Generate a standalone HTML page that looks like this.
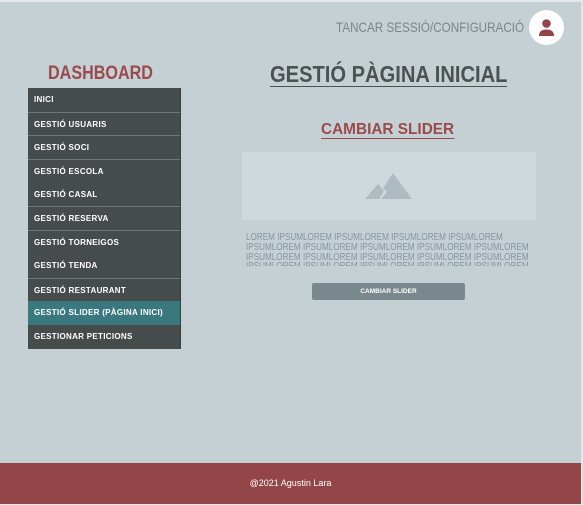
<!DOCTYPE html>
<html><head><meta charset="utf-8"><style>
*{margin:0;padding:0;box-sizing:border-box}
body{width:583px;height:505px;background:#e3e7e9;position:relative;overflow:hidden;font-family:"Liberation Sans",sans-serif}
.page{position:absolute;left:0;top:2px;width:581px;height:461px;background:#c5d0d4}
.foot{position:absolute;left:0;top:463px;width:581px;height:41px;background:#944548;color:#fff;font-size:9px;text-align:center;line-height:41px}
.n{transform-origin:0 0;white-space:nowrap}
.top{position:absolute;left:336px;top:19px;font-size:14px;color:#7d8587;transform:scaleX(0.835)}
.av{position:absolute;left:529px;top:10px;width:35px;height:35px;border-radius:50%;background:#fff}
.dash{position:absolute;left:48px;top:63px;font-size:19px;font-weight:bold;color:#9a4a4d;transform:scaleX(0.85)}
.side{position:absolute;left:28px;top:88px;width:153px;background:#464b4b;border-right:1px solid #3a3f3f}
.side div{height:23.7px;line-height:23.7px;padding-left:6px;font-size:8px;font-weight:bold;color:#fff;letter-spacing:0.3px}
.side .b{border-top:1px solid #6e7676}
.side .act{background:#3a7880}
.h1{position:absolute;left:270px;top:62px;font-size:23px;font-weight:bold;color:#4c524f;border-bottom:1.5px solid #4c524f;line-height:24px;transform:scaleX(0.875)}
.h2{position:absolute;left:321px;top:121px;font-size:16px;font-weight:bold;color:#9a4a4d;border-bottom:1.5px solid #9a4a4d;line-height:17px;transform:scaleX(0.96)}
.img{position:absolute;left:242px;top:152px;width:294px;height:68px;background:#cfd8dc}
.lw{position:absolute;left:246px;top:233px;width:290px;height:33px;overflow:hidden}
.lorem{font-size:10.5px;color:#8595a0;line-height:9.8px;transform:scaleX(0.775)}
.btn{position:absolute;left:312px;top:283px;width:153px;height:17px;background:#78888d;border-radius:2px;color:#fff;font-size:6.5px;font-weight:bold;text-align:center;line-height:17px}
</style></head><body>
<div class="page"></div>
<div class="top n">TANCAR SESSIÓ/CONFIGURACIÓ</div>
<div class="av"><svg width="35" height="35" viewBox="0 0 35 35"><circle cx="17.5" cy="13.5" r="4.3" fill="#944548"/><path d="M10 26 Q10 19.5 17.5 19.5 Q25 19.5 25 26 Z" fill="#944548"/></svg></div>
<div class="dash n">DASHBOARD</div>
<div class="side">
<div>INICI</div><div class="b">GESTIÓ USUARIS</div><div class="b">GESTIÓ SOCI</div><div class="b">GESTIÓ ESCOLA</div><div>GESTIÓ CASAL</div><div class="b">GESTIÓ RESERVA</div><div class="b">GESTIÓ TORNEIGOS</div><div>GESTIÓ TENDA</div><div class="b">GESTIÓ RESTAURANT</div><div class="act">GESTIÓ SLIDER (PÀGINA INICI)</div><div>GESTIONAR PETICIONS</div>
</div>
<div class="h1 n">GESTIÓ PÀGINA INICIAL</div>
<div class="h2 n">CAMBIAR SLIDER</div>
<div class="img"><svg width="294" height="68" viewBox="0 0 294 68"><path d="M123 47 L136 32 L142 39 L137 47 Z" fill="#aebcc2"/><path d="M139 47 L145 40 L141 36 L151 21 L170 47 Z" fill="#aebcc2"/></svg></div>
<div class="lw"><div class="lorem n">LOREM IPSUMLOREM IPSUMLOREM IPSUMLOREM IPSUMLOREM<br>IPSUMLOREM IPSUMLOREM IPSUMLOREM IPSUMLOREM IPSUMLOREM<br>IPSUMLOREM IPSUMLOREM IPSUMLOREM IPSUMLOREM IPSUMLOREM<br>IPSUMLOREM IPSUMLOREM IPSUMLOREM IPSUMLOREM IPSUMLOREM</div></div>
<div class="btn">CAMBIAR SLIDER</div>
<div class="foot">@2021 Agustin Lara</div>
</body></html>
